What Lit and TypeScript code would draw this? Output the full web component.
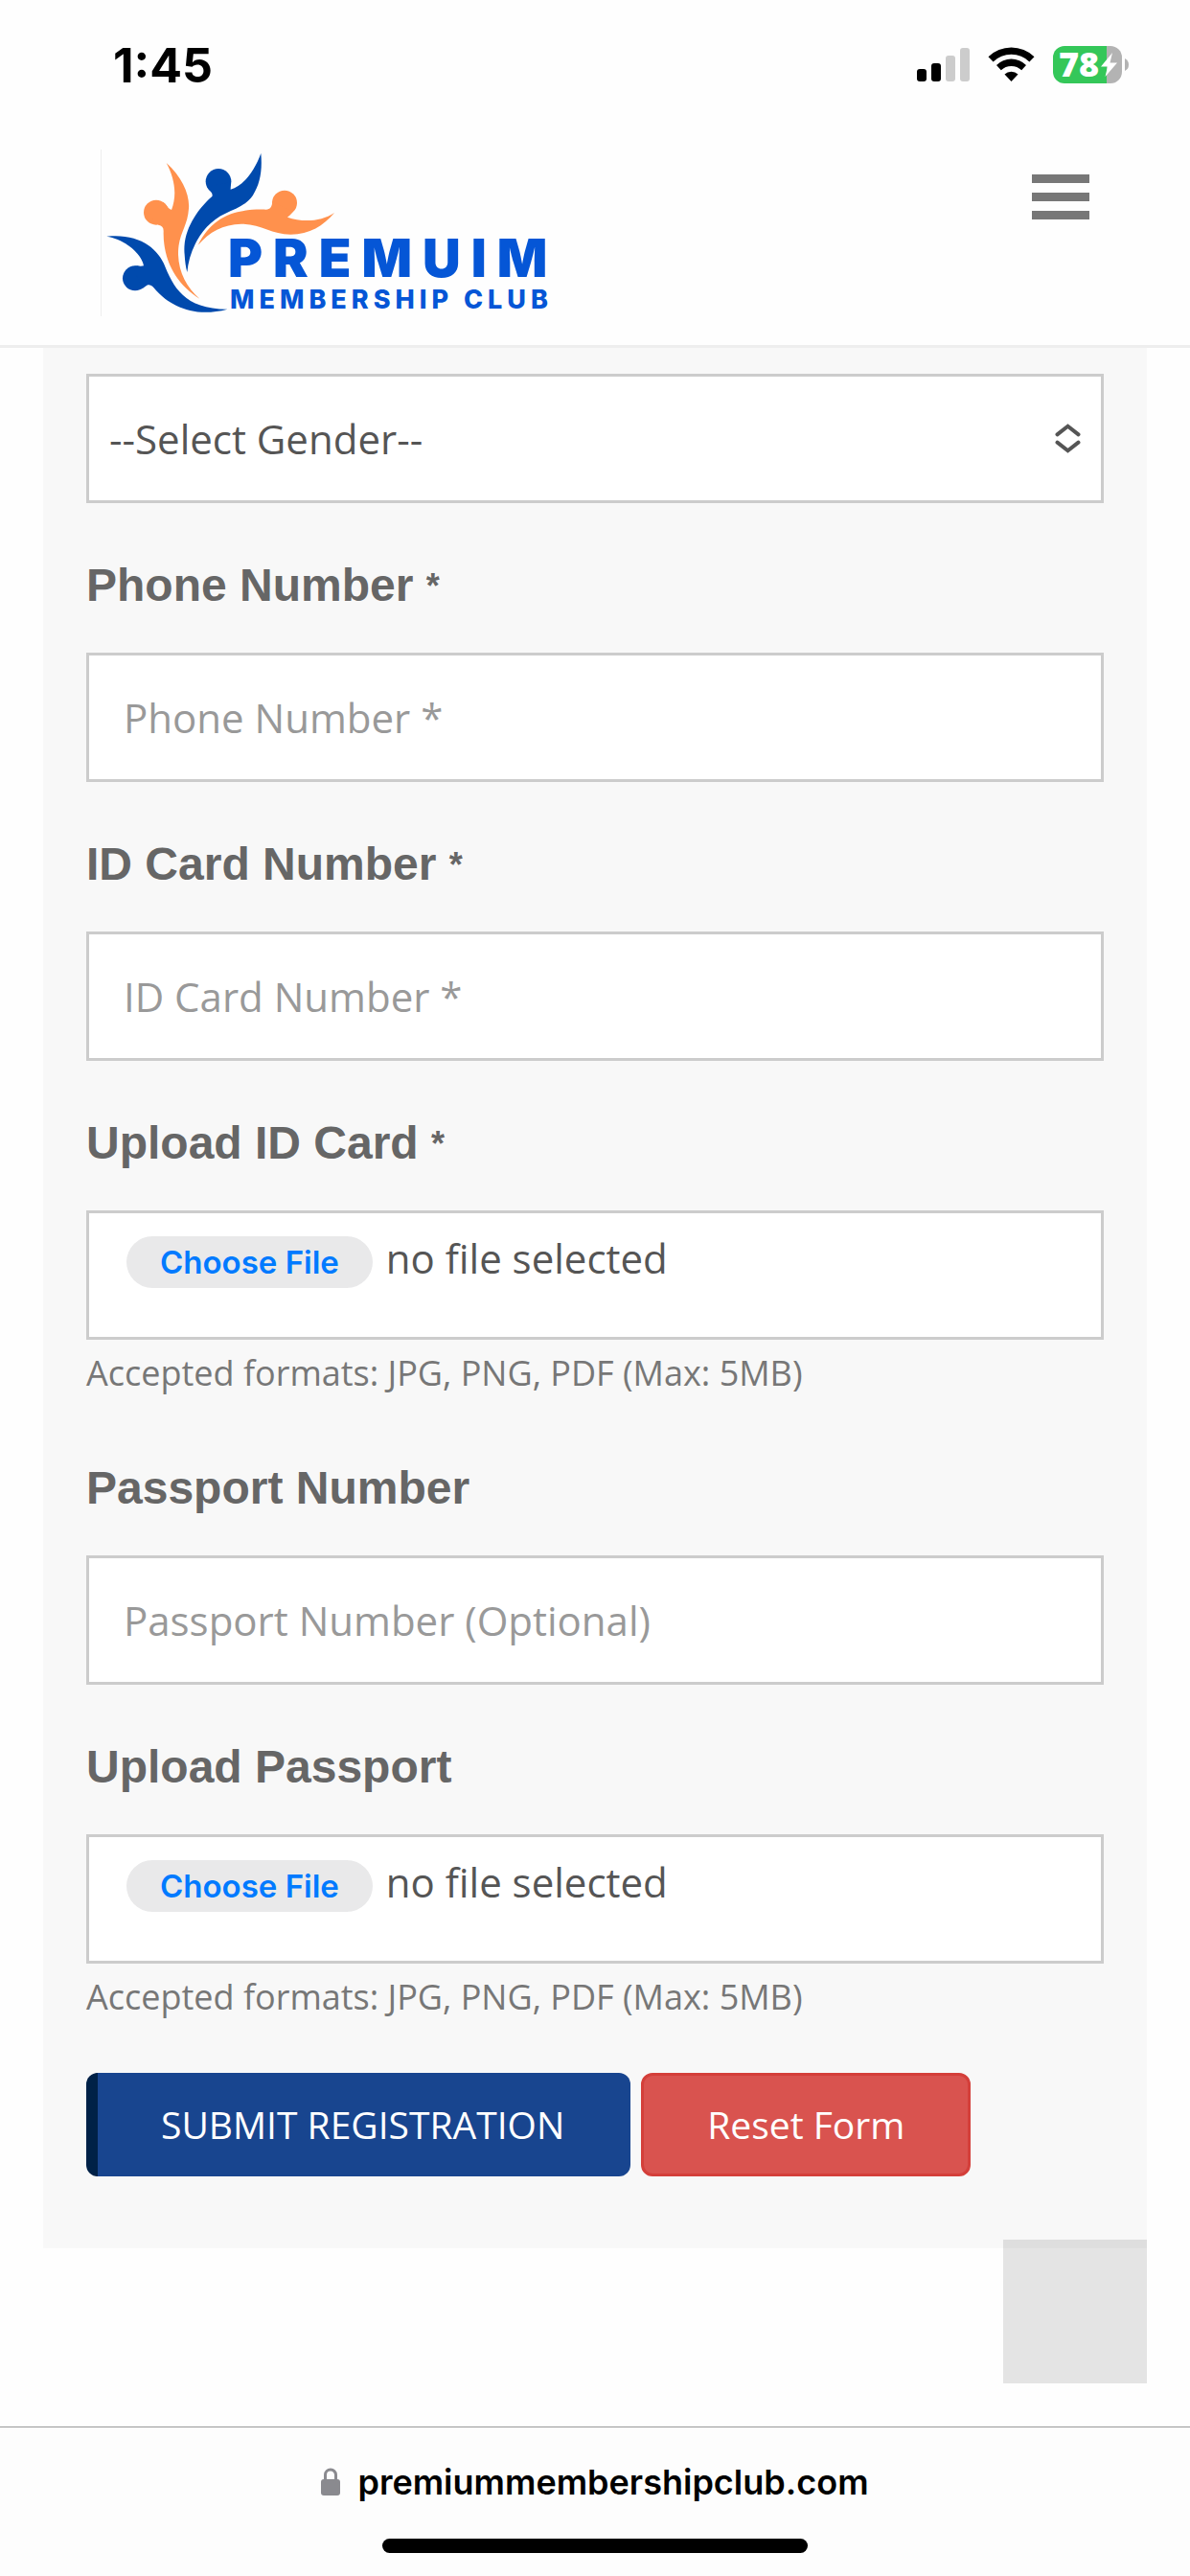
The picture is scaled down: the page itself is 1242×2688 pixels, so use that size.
import { LitElement, html, css } from "lit";
import { customElement, property, state } from "lit/decorators.js";

@customElement("status-bar")
class StatusBar extends LitElement {
  static styles = css`
    :host {
      display: block;
    }
    .bar {
      display: flex;
      align-items: flex-start;
      justify-content: space-between;
      padding: 40px 64px 36px 118px;
    }
    .time {
      font: 700 50px/56px Inter, "Liberation Sans", sans-serif;
      color: #000;
    }
    .icons {
      display: block;
      width: 222px;
      height: 56px;
    }
    .level {
      font: 800 36px "Open Sans", "Noto Sans", sans-serif;
      fill: #fff;
    }
  `;
  render() {
    return html`<div class="bar">
      <span class="time">1:45</span>
      <svg class="icons" viewBox="956 40 222 56" role="img" aria-label="Signal, Wi-Fi, battery 78 percent">
        <rect x="957" y="72" width="10" height="13" rx="3" />
        <rect x="972" y="66" width="10" height="19" rx="3" />
        <rect x="987" y="58" width="10" height="27" rx="3" fill="#ccc" />
        <rect x="1002" y="50" width="10" height="35" rx="3" fill="#ccc" />
        <path d="M1031.500 59.300 A34.500 34.500 0 0 1 1079.500 59.300 L1074.400 64.400 A27 27 0 0 0 1036.600 64.400 Z" />
        <path d="M1040 68 A22 22 0 0 1 1071 68 L1066.200 73.200 A15.500 15.500 0 0 0 1044.800 73.200 Z" />
        <path d="M1048.500 77.600 A10 10 0 0 1 1062.500 77.600 L1055.500 85 Z" />
        <clipPath id="cell"><rect x="1099" y="48" width="72" height="39" rx="12" /></clipPath>
        <g clip-path="url(#cell)">
          <rect x="1099" y="48" width="56" height="39" fill="#34c759" />
          <rect x="1155" y="48" width="16" height="39" fill="#b3b3b3" />
        </g>
        <path d="M1174 61 Q1178 63 1178 67.500 Q1178 72 1174 74 Z" fill="#b3b3b3" />
        <text class="level" x="1105" y="80">78</text>
        <path d="M1161 55 L1149 69.500 H1156 L1153.500 80 L1166 65.500 H1158.500 Z" fill="#fff" />
      </svg>
    </div>`;
  }
}

@customElement("site-header")
class SiteHeader extends LitElement {
  static styles = css`
    :host {
      display: block;
      border-bottom: 3px solid #eee;
    }
    .row {
      display: flex;
      justify-content: space-between;
      align-items: flex-start;
      padding: 24px 105px 30px;
    }
    .logo {
      display: block;
      border-left: 1px solid #eee;
    }
    .mark {
      display: block;
      width: 480px;
      height: 174px;
    }
    .word {
      font-family: Inter, "Liberation Sans", sans-serif;
      fill: #0556d6;
    }
    .name {
      font-size: 55px;
      font-weight: 900;
      letter-spacing: 11px;
    }
    .club {
      font-size: 27px;
      font-weight: 800;
      letter-spacing: 5px;
    }
    .menu {
      display: flex;
      flex-direction: column;
      gap: 10px;
      width: 60px;
      margin: 26px 0 0;
      padding: 0;
      border: 0;
      background: none;
    }
    .line {
      height: 9px;
      background: #777;
    }
  `;
  render() {
    return html`<header class="row">
      <a class="logo" href="#" aria-label="Premuim Membership Club">
        <svg class="mark" viewBox="1 0 480 174">
          <g transform="translate(-15 -11) scale(0.33333)">
            <g fill="#004aad">
              <circle cx="414" cy="133" r="40" />
              <path d="M547 45 C528 98 492 148 452 158 L453 135 L378 150 Q399 171 394 180 C346 222 300 290 308 362 Q310 396 316 417 C322 350 360 268 436 233 C470 217 500 208 522 176 C544 142 552 98 547 45 Z" />
              <circle cx="153" cy="436" r="39" />
              <path d="M64 305 C150 296 212 328 243 390 C272 462 306 533 442 533 C338 561 262 522 218 473 C208 461 202 454 190 458 Q182 463 176 468 L145 400 L160 397 Q171 399 180 397 C174 358 116 312 64 305 Z" />
            </g>
            <g fill="#ff914d">
              <circle cx="621" cy="200" r="39" />
              <path d="M777 231 C734 260 676 261 630 245 Q641 237 647 228 L583 195 C582 212 576 221 563 221 C460 218 393 246 350 332 C386 291 428 267 486 266 C548 266 580 299 640 299 C700 299 742 272 777 231 Z" />
              <circle cx="219" cy="230" r="39" />
              <path d="M251 75 C300 118 325 176 321 218 C317 278 287 296 288 362 C290 420 316 466 355 500 C284 456 240 382 242 290 Q243 271 226 269 L200 240 L240 197 C252 205 255 217 267 222 C284 178 279 128 251 75 Z" />
            </g>
          </g>
          <text class="word name" x="133" y="133">PREMUIM</text>
          <text class="word club" x="135" y="166">MEMBERSHIP CLUB</text>
        </svg>
      </a>
      <button class="menu" type="button" aria-label="Menu">
        <span class="line"></span><span class="line"></span><span class="line"></span>
      </button>
    </header>`;
  }
}

const fieldStyles = css`
  :host {
    display: block;
    margin-bottom: 45px;
  }
  .label {
    display: block;
    margin-bottom: 30px;
    font: 700 48px/81px "Liberation Sans", Arial, sans-serif;
    color: #666;
  }
  .star {
    font-size: 36px;
    line-height: 1;
    vertical-align: 3px;
  }
  .box {
    box-sizing: border-box;
    display: block;
    width: 100%;
    height: 135px;
    margin: 0;
    border: 3px solid #ccc;
    border-radius: 0;
    background: #fff;
    font: 42px/57px "Open Sans", sans-serif;
    color: #555;
  }
`;

@customElement("text-field")
class TextField extends LitElement {
  @property() label = "";
  @property() hint = "";
  @property({ type: Boolean }) required = false;
  @property() type = "text";
  static styles = [
    fieldStyles,
    css`
      .entry {
        padding: 0 36px;
      }
      .entry::placeholder {
        color: #999;
        opacity: 1;
      }
    `,
  ];
  render() {
    return html`<label class="label" for="entry"
        >${this.label}${this.required ? html` <span class="star">*</span>` : ""}</label
      >
      <input class="box entry" id="entry" type=${this.type} placeholder=${this.hint} ?required=${this.required} />`;
  }
}

@customElement("gender-field")
class GenderField extends LitElement {
  static styles = [
    fieldStyles,
    css`
      .wrap {
        position: relative;
      }
      .choice {
        appearance: none;
        padding: 0 63px 0 21px;
      }
      .arrows {
        position: absolute;
        top: 52px;
        right: 24px;
        width: 27px;
        height: 31px;
        pointer-events: none;
      }
    `,
  ];
  render() {
    return html`<div class="wrap">
      <select class="box choice" aria-label="Gender">
        <option>--Select Gender--</option>
        <option>Male</option>
        <option>Female</option>
      </select>
      <svg class="arrows" viewBox="0 0 27 31" fill="none" stroke="#555" stroke-width="4" stroke-linecap="round">
        <path d="M2.500 11.300 L13.500 2.700 L24.500 11.300" />
        <path d="M2.500 19.700 L13.500 28.300 L24.500 19.700" />
      </svg>
    </div>`;
  }
}

@customElement("upload-field")
class UploadField extends LitElement {
  @property() label = "";
  @property({ type: Boolean }) required = false;
  @state() private fileName = "";
  static styles = [
    fieldStyles,
    css`
      .upload {
        position: relative;
        display: flex;
        align-items: flex-start;
        gap: 14px;
        padding: 24px 39px;
      }
      .pill {
        padding: 0 35px;
        border-radius: 27px;
        background: #e9e9ea;
        font: 600 33px/54px Inter, "Liberation Sans", sans-serif;
        color: #007aff;
      }
      .state {
        line-height: 46px;
      }
      .file {
        position: absolute;
        inset: 0;
        width: 100%;
        opacity: 0;
      }
      .note {
        display: block;
        font: 36px/69px "Open Sans", sans-serif;
        color: #777;
      }
    `,
  ];
  private pick(e: Event) {
    this.fileName = (e.target as HTMLInputElement).files?.[0]?.name ?? "";
  }
  render() {
    return html`<label class="label" for="file"
        >${this.label}${this.required ? html` <span class="star">*</span>` : ""}</label
      >
      <div class="box upload">
        <span class="pill">Choose File</span>
        <span class="state">${this.fileName || "no file selected"}</span>
        <input class="file" id="file" type="file" aria-describedby="note" ?required=${this.required} @change=${this.pick} />
      </div>
      <small class="note" id="note">Accepted formats: JPG, PNG, PDF (Max: 5MB)</small>`;
  }
}

@customElement("app-root")
class AppRoot extends LitElement {
  static styles = css`
    :host {
      display: flex;
      flex-direction: column;
      min-height: 100vh;
      background: #fefefe;
    }
    .main {
      position: relative;
      flex: 1;
      padding: 0 45px 186px;
    }
    .panel {
      padding: 27px 45px 75px;
      background: #f8f8f8;
    }
    .actions {
      display: flex;
      flex-wrap: wrap;
      gap: 11px;
    }
    .btn {
      height: 108px;
      margin: 0;
      border-radius: 12px;
      font: 39px/54px "Open Sans", sans-serif;
      color: #fff;
    }
    .submit {
      padding: 0 69px 0 66px;
      border: 0;
      border-left: 12px solid #002147;
      background: #18458f;
    }
    .reset {
      padding: 0 66px;
      border: 3px solid #d43f3a;
      background: #d9534f;
    }
    .top {
      position: absolute;
      right: 45px;
      bottom: 45px;
      width: 150px;
      height: 150px;
      padding: 0;
      border: 0;
      background: rgba(0, 0, 0, 0.1);
    }
    .browser {
      display: flex;
      flex-direction: column;
      align-items: center;
      gap: 34px;
      padding: 32px 0 24px;
      border-top: 1px solid #999;
      background: #fdfdfd;
    }
    .address {
      display: flex;
      align-items: center;
      gap: 18px;
      font: 600 36px/50px Inter, "Liberation Sans", sans-serif;
      color: #000;
    }
    .lock {
      width: 20px;
      height: 30px;
    }
    .home {
      width: 444px;
      height: 15px;
      border-radius: 8px;
      background: #000;
    }
  `;
  render() {
    return html`<status-bar></status-bar>
      <site-header></site-header>
      <main class="main">
        <form class="panel">
          <gender-field></gender-field>
          <text-field label="Phone Number" hint="Phone Number *" type="tel" required></text-field>
          <text-field label="ID Card Number" hint="ID Card Number *" required></text-field>
          <upload-field label="Upload ID Card" required></upload-field>
          <text-field label="Passport Number" hint="Passport Number (Optional)"></text-field>
          <upload-field label="Upload Passport"></upload-field>
          <div class="actions">
            <button class="btn submit" type="submit">SUBMIT REGISTRATION</button>
            <button class="btn reset" type="reset">Reset Form</button>
          </div>
        </form>
        <button class="top" type="button" aria-label="Back to top"></button>
      </main>
      <footer class="browser">
        <div class="address">
          <svg class="lock" viewBox="0 0 20 30">
            <rect x="0" y="12" width="20" height="17" rx="3" fill="#8a8a8f" />
            <path d="M4.500 13 V7.500 a5.500 5.500 0 0 1 11 0 V13" fill="none" stroke="#8a8a8f" stroke-width="3" />
          </svg>
          <span>premiummembershipclub.com</span>
        </div>
        <div class="home"></div>
      </footer>`;
  }
}
